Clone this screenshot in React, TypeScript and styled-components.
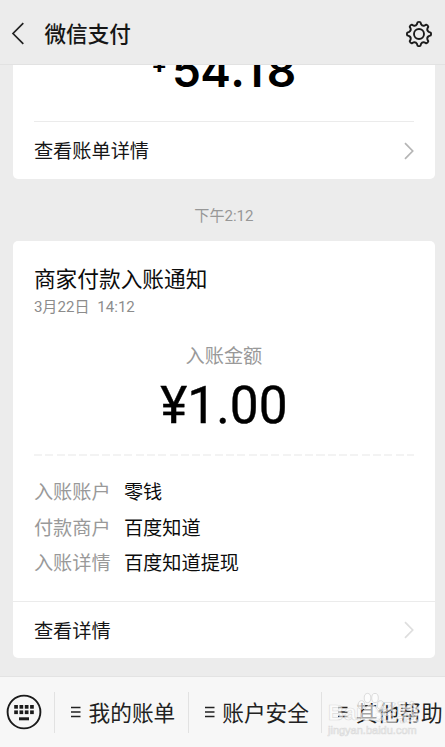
import React from 'react';
import styled, { createGlobalStyle } from 'styled-components';

const GlobalStyle = createGlobalStyle`
  * { box-sizing: border-box; }
  html, body { margin: 0; padding: 0; overflow: hidden; }
  body { background: #ececec; font-family: Roboto, "Noto Sans CJK SC", sans-serif; color: #161616; }
`;

const Screen = styled.div`
  width: 445px;
  height: 747px;
  display: flex;
  flex-direction: column;
  overflow: hidden;
  background: #ececec;
`;

const Header = styled.header`
  flex: none;
  height: 65px;
  display: flex;
  align-items: center;
  padding: 3px 12px 0 11px;
  border-bottom: 1px solid #e2e2e2;
`;

const Title = styled.h1`
  flex: 1;
  margin: 0 0 0 19.5px;
  padding-top: 2px;
  font-size: 21.6px;
  line-height: 32px;
  font-weight: 500;
`;

const Feed = styled.main`
  flex: 1;
  min-height: 0;
  display: flex;
  flex-direction: column;
  padding: 0 10.5px 0 13.4px;
`;

const Card = styled.section<{ $cut?: boolean }>`
  flex: none;
  height: ${(p) => (p.$cut ? 114 : 417)}px;
  display: flex;
  flex-direction: column;
  background: #fff;
  border-radius: ${(p) => (p.$cut ? '0 0 5px 5px' : '5px')};
  overflow: hidden;
`;

const CutAmount = styled.div`
  height: 56px;
  display: flex;
  justify-content: center;
  align-items: flex-end;
  padding: 0 0 28px 0;
  font-family: Inter, sans-serif;
  font-weight: 600;
  font-size: 46px;
  line-height: 46px;
  color: #000;
`;

const CutYen = styled.span`
  font-size: 27px;
  line-height: 46px;
  margin: 0 5px 7px 0;
`;

const CutDigits = styled.span<{ $spacing: number }>`
  letter-spacing: ${(p) => p.$spacing}px;
`;

const LinkRow = styled.div<{ $inset?: boolean }>`
  flex: none;
  display: flex;
  align-items: center;
  justify-content: space-between;
  height: ${(p) => (p.$inset ? 58 : 57)}px;
  margin: 0 ${(p) => (p.$inset ? 20.5 : 0)}px;
  border-top: 1px solid #ebebeb;
  padding: 0 ${(p) => (p.$inset ? 0 : 20.5)}px;
  font-size: 19.2px;
  line-height: 28px;
`;

const LinkLabel = styled.span`
  padding-top: 3px;
`;

const Time = styled.div`
  flex: none;
  height: 62px;
  padding-top: 12px;
  font-size: 15.1px;
  line-height: 50px;
  text-align: center;
  color: #979797;
`;

const Notice = styled.div`
  flex: 1;
  display: flex;
  flex-direction: column;
  padding: 23px 20.5px 0;
`;

const NoticeTitle = styled.h2`
  margin: 0;
  font-size: 21.7px;
  line-height: 32px;
  font-weight: 400;
  color: #0c0c0c;
`;

const NoticeDate = styled.div`
  font-size: 15.1px;
  line-height: 23px;
  color: #8c8c8c;
  word-spacing: 4px;
`;

const AmountLabel = styled.div`
  margin-top: 24px;
  font-size: 19.2px;
  line-height: 28px;
  text-align: center;
  color: #999;
`;

const Amount = styled.div`
  font-size: 51.4px;
  line-height: 70px;
  text-align: center;
  color: #000;
  -webkit-text-stroke: 0.4px #000;
`;

const DashedLine = styled.div`
  flex: none;
  height: 2px;
  margin-top: 13px;
  background: repeating-linear-gradient(90deg, #f3f3f3 0 8px, #fff 8px 11.3px);
`;

const Details = styled.dl`
  display: grid;
  grid-template-columns: 90px 1fr;
  grid-auto-rows: 35.5px;
  margin: 19px 0 0;
  font-size: 19.2px;
  line-height: 35.5px;
`;

const Term = styled.dt`
  color: #999;
`;

const Value = styled.dd`
  margin: 0;
  color: #0c0c0c;
`;

const Footer = styled.footer`
  flex: none;
  position: relative;
  display: flex;
  align-items: center;
  height: 71px;
  border-top: 1px solid #e3e3e3;
  background: #f7f7f7;
`;

const KeyboardButton = styled.div`
  flex: none;
  width: 54px;
  height: 36px;
  padding-left: 6px;
`;

const MenuItem = styled.div`
  flex: none;
  width: 133.7px;
  height: 41px;
  display: flex;
  align-items: center;
  padding-left: 16px;
  gap: 7.5px;
  border-left: 1px solid #e2e2e2;
  font-size: 21.7px;
  white-space: nowrap;
  color: #222;
`;

const MenuLabel = styled.span`
  padding-top: 3px;
  line-height: 38px;
`;

const Watermark = styled.div`
  position: absolute;
  left: 328px;
  top: 13px;
  width: 96px;
  height: 48px;
  color: rgba(255, 255, 255, 0.6);
  -webkit-text-stroke: 0.7px rgba(200, 200, 200, 0.6);
  font-family: "Liberation Sans", "Noto Sans CJK SC", sans-serif;
`;

const MarkBrand = styled.div`
  display: flex;
  justify-content: space-between;
  padding: 11px 5px 0 0;
  font-size: 22px;
  line-height: 24px;
  font-weight: 700;
`;

const MarkUrl = styled.div`
  font-size: 11px;
  line-height: 12px;
  margin-top: -1px;
`;

const Paw = styled.svg`
  position: absolute;
  left: 29px;
  top: 2px;
`;

const Chevron = ({ color }: { color: string }) => (
  <svg width="10" height="18" viewBox="0 0 10 18" fill="none" stroke={color} strokeWidth="1.7">
    <path d="M1 1.2 8.7 9 1 16.8" />
  </svg>
);

const BackIcon = () => (
  <svg width="14" height="23" viewBox="0 0 14 23" fill="none" stroke="#222" strokeWidth="1.7">
    <path d="M12.3 1.2 2 11.5l10.3 10.3" />
  </svg>
);

// Eight rounded teeth joined by shallow curved valleys.
function gearPath() {
  const at = (r: number, deg: number) => {
    const a = ((deg - 90) * Math.PI) / 180;
    return `${(r * Math.cos(a)).toFixed(2)} ${(r * Math.sin(a)).toFixed(2)}`;
  };
  let d = `M${at(11.8, -7)}`;
  for (let i = 0; i < 8; i++) {
    const c = i * 45;
    d += ` Q${at(12.5, c)} ${at(11.8, c + 7)} L${at(10, c + 12)} Q${at(8.4, c + 22.5)} ${at(10, c + 33)} L${at(11.8, c + 38)}`;
  }
  return `${d} Z`;
}

const GearIcon = () => (
  <svg width="28" height="28" viewBox="-14 -14 28 28" fill="none" stroke="#1b1b1b" strokeWidth="1.9" strokeLinejoin="round">
    <circle r="5" />
    <path d={gearPath()} />
  </svg>
);

const KeyboardIcon = () => (
  <svg width="36" height="36" viewBox="0 0 36 36">
    <circle cx="18" cy="18" r="16.4" fill="none" stroke="#1b1b1b" strokeWidth="1.9" />
    {[11, 16.4].map((y) =>
      [8.2, 13.5, 18.8, 24.1].map((x) => <rect key={`${x}-${y}`} x={x} y={y} width="3.7" height="3.7" fill="#1b1b1b" />),
    )}
    <rect x="13" y="23.3" width="10" height="3" fill="#1b1b1b" />
  </svg>
);

const MenuIcon = () => (
  <svg width="10" height="12" viewBox="0 0 10 12" stroke="#222" strokeWidth="1.6">
    <path d="M0 1.5h9.5M0 6h9.5M0 10.5h9.5" />
  </svg>
);

const details = [
  ['入账账户', '零钱'],
  ['付款商户', '百度知道'],
  ['入账详情', '百度知道提现'],
];

const menu = ['我的账单', '账户安全', '其他帮助'];

export default function App() {
  return (
    <>
      <GlobalStyle />
      <Screen>
        <Header>
          <BackIcon />
          <Title>微信支付</Title>
          <GearIcon />
        </Header>
        <Feed>
          <Card $cut>
            <CutAmount>
              <CutYen>¥</CutYen>
              <CutDigits $spacing={-0.6}>54</CutDigits>
              <CutDigits $spacing={3.2}>.1</CutDigits>
              <CutDigits $spacing={0}>8</CutDigits>
            </CutAmount>
            <LinkRow $inset>
              <LinkLabel>查看账单详情</LinkLabel>
              <Chevron color="#b5b5b5" />
            </LinkRow>
          </Card>
          <Time>下午2:12</Time>
          <Card>
            <Notice>
              <NoticeTitle>商家付款入账通知</NoticeTitle>
              <NoticeDate>3月22日 14:12</NoticeDate>
              <AmountLabel>入账金额</AmountLabel>
              <Amount>¥1.00</Amount>
              <DashedLine />
              <Details>
                {details.map(([term, value]) => (
                  <React.Fragment key={term}>
                    <Term>{term}</Term>
                    <Value>{value}</Value>
                  </React.Fragment>
                ))}
              </Details>
            </Notice>
            <LinkRow>
              <LinkLabel>查看详情</LinkLabel>
              <Chevron color="#dedede" />
            </LinkRow>
          </Card>
        </Feed>
        <Footer>
          <KeyboardButton>
            <KeyboardIcon />
          </KeyboardButton>
          {menu.map((label) => (
            <MenuItem key={label}>
              <MenuIcon />
              <MenuLabel>{label}</MenuLabel>
            </MenuItem>
          ))}
          <Watermark>
            <MarkBrand>
              <span>Bai</span>
              <span>经验</span>
            </MarkBrand>
            <MarkUrl>jingyan.baidu.com</MarkUrl>
            <Paw width="28" height="30" viewBox="0 0 28 30" fill="rgba(255,255,255,0.6)" stroke="#d4d4d4" strokeWidth="0.8">
              <ellipse cx="4.5" cy="13" rx="3.2" ry="4.3" />
              <ellipse cx="10.5" cy="6" rx="3.3" ry="4.6" />
              <ellipse cx="18" cy="6" rx="3.3" ry="4.6" />
              <ellipse cx="23.5" cy="13" rx="3.2" ry="4.3" />
              <path d="M14 13c5 0 5 4 8.500 7 4 4 1 9-4 8.500-3-.6-6-.6-9 0-5 .5-8-4.500-4-8.500C9 17 9 13 14 13z" />
            </Paw>
          </Watermark>
        </Footer>
      </Screen>
    </>
  );
}
